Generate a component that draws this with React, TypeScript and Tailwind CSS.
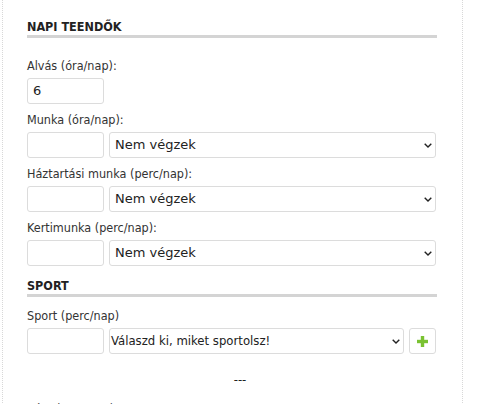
import React from "react";

const COND = '"DejaVu Sans Condensed", Tahoma, "DejaVu Sans", sans-serif';
const WIDE = '"DejaVu Sans", Verdana, sans-serif';

const Chevron = () => (
  <svg width="8" height="5" viewBox="0 0 8 5" className="absolute right-[3px] top-[10px]">
    <path d="M0.7 0.7 L4 4 L7.3 0.7" stroke="#222" strokeWidth="1.4" fill="none" />
  </svg>
);

const Input = ({ value }: { value?: string }) => (
  <div
    className="w-[77px] h-[26px] border border-[#dcdcdc] rounded-[3px] bg-white px-[5px] flex items-center text-[13px] text-[#222]"
    style={{ fontFamily: WIDE }}
  >
    {value}
  </div>
);

const Select = ({ text }: { text: string }) => (
  <div
    className="relative w-[327px] h-[26px] border border-[#dcdcdc] rounded-[3px] bg-white pl-[5px] flex items-center text-[13px] text-[#222]"
    style={{ fontFamily: WIDE }}
  >
    {text}
    <Chevron />
  </div>
);

const Label = ({ children, first }: { children: React.ReactNode; first?: boolean }) => (
  <div className={`text-[12.5px] leading-[16px] h-[16px] mb-[4px] ${first ? "" : "mt-[8px]"}`}>{children}</div>
);

const Heading = ({ children }: { children: React.ReactNode }) => (
  <div className="border-b-[3px] border-[#d4d4d4] pb-[1px]">
    <div className="font-bold text-[12.5px] leading-[15px] text-[#222]">{children}</div>
  </div>
);

export default function App() {
  return (
    <div className="w-[480px] h-[404px] overflow-hidden bg-white" style={{ fontFamily: COND }}>
      <div className="ml-[2px] w-[461px] min-h-[404px] border-l border-r border-dotted border-[#d8d8d8] pl-[24px] pr-[25px] pt-[19px] text-[#333]">
        <Heading>NAPI TEENDŐK</Heading>
        <div className="h-[20px]" />
        <Label first>Alvás (óra/nap):</Label>
        <div className="flex gap-[5px] h-[26px]">
          <Input value="6" />
        </div>
        <Label>Munka (óra/nap):</Label>
        <div className="flex gap-[5px] h-[26px]">
          <Input />
          <Select text="Nem végzek" />
        </div>
        <Label>Háztartási munka (perc/nap):</Label>
        <div className="flex gap-[5px] h-[26px]">
          <Input />
          <Select text="Nem végzek" />
        </div>
        <Label>Kertimunka (perc/nap):</Label>
        <div className="flex gap-[5px] h-[26px]">
          <Input />
          <Select text="Nem végzek" />
        </div>
        <div className="h-[12px]" />
        <Heading>SPORT</Heading>
        <div className="h-[11px]" />
        <Label first>Sport (perc/nap)</Label>
        <div className="flex gap-[5px] h-[26px]">
          <Input />
          <div className="relative w-[295px] h-[26px] border border-[#dcdcdc] rounded-[3px] bg-white pl-[1px] flex items-center text-[13px] text-[#222]">
            Válaszd ki, miket sportolsz!
            <Chevron />
          </div>
          <div className="w-[27px] h-[26px] border border-[#dcdcdc] rounded-[3px] bg-white flex items-center justify-center">
            <svg width="11" height="11" viewBox="0 0 11 11">
              <rect x="3.8" y="0" width="3.4" height="11" fill="#7ac232" />
              <rect x="0" y="3.8" width="11" height="3.4" fill="#7ac232" />
            </svg>
          </div>
        </div>
        <div className="text-center text-[13px] leading-[16px] mt-[18px] pl-[16px] text-[#222]">---</div>
        <div className="text-[12.5px] leading-[16px] mt-[13px]">Séta (perc/nap):</div>
      </div>
    </div>
  );
}
